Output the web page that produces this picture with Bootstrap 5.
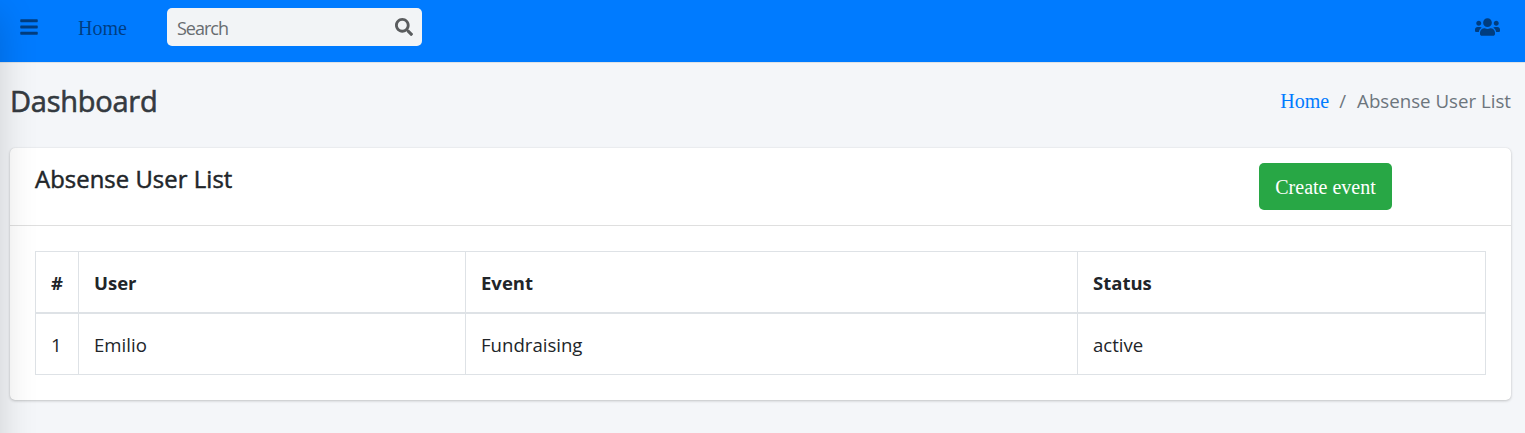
<!DOCTYPE html>
<html lang="en">
<head>
<meta charset="utf-8">
<meta name="viewport" content="width=device-width, initial-scale=1">
<title>Absense User List</title>
<link rel="stylesheet" href="https://cdn.jsdelivr.net/npm/bootstrap@5.3.0/dist/css/bootstrap.min.css">
<style>
body{font-family:"Segoe UI","Open Sans",sans-serif;font-size:18.6px;line-height:30px;color:#212529;background:#f4f6f9;height:433px;overflow:hidden}
.serif-text{font-family:"Liberation Serif",serif;font-size:20px;letter-spacing:0}
.top-bar{height:63px;background:#007bff;border-bottom:1px solid #dee2e6;padding:8px 25px 0 20px}
.top-bar svg,.top-bar a{fill:rgba(0,0,0,.5);color:rgba(0,0,0,.5)}
.top-bar .tool-row{height:38px}
.home-link{margin-left:40px;width:49px;line-height:38px;padding-top:1px}
.search-box{width:255px;height:38px;margin-left:40px;background:#f2f4f6;border-radius:5px;padding:0 9px 0 10px}
.search-box input{font-family:"Segoe UI","Open Sans",sans-serif;font-weight:400;font-size:18px;letter-spacing:-1px;width:180px;height:38px;color:#495057;padding:2px 0 0}
.search-box input::placeholder{color:#686c70;opacity:1}
.search-box svg{fill:#5a5c5e}
.title-row{height:85px;padding:0 14px 0 10px}
.page-title{font-size:29px;font-weight:500;color:#343a40;line-height:36px;letter-spacing:-.25px;-webkit-text-stroke:.6px #343a40;margin:-9px 0 0}
.crumbs{margin-top:-9px;color:#6c757d;line-height:30px}
.crumbs a{color:#007bff}
.crumb-sep{padding:0 11px 0 10px}
.crumb-now{font-size:18.7px}
.main-card{margin:0 14px 0 10px;height:252px;border:0;border-radius:5px;box-shadow:0 0 1px rgba(0,0,0,.125),0 1px 3px rgba(0,0,0,.2)}
.main-card .card-header{height:78px;background:transparent;border-bottom:1px solid rgba(0,0,0,.125);padding:15px 119px 0 25px}
.list-title{font-size:23.8px;font-weight:500;line-height:32px;letter-spacing:.08px;-webkit-text-stroke:.5px #212529;margin:0}
.btn-create{width:133px;height:47px;background:#28a745;color:#fff;border:0;border-radius:5px;padding:1px 0 0;line-height:47px}
.main-card .card-body{padding:25px 25px 0}
.data-table{table-layout:fixed;width:1451px;border-collapse:collapse;margin:0;color:#212529}
.data-table th,.data-table td{border:1px solid #dee2e6;padding:2px 15px 0;vertical-align:middle;height:62px;line-height:30px;background:transparent;box-shadow:none}
.data-table thead th{border-bottom-width:2px;height:61px;font-weight:700;padding-top:2px;font-size:18.5px}
.edge-panel{position:fixed;left:-250px;top:0;width:250px;height:200vh;box-shadow:0 14px 36px rgba(0,0,0,.16);z-index:1038}
</style>
</head>
<body>
<aside class="edge-panel"></aside>
<nav class="top-bar">
  <div class="tool-row d-flex align-items-center">
    <a href="#" class="d-flex" aria-label="Menu"><svg width="18" height="20" viewBox="0 0 448 512"><path d="M16 132h416c8.8 0 16-7.200 16-16V76c0-8.800-7.200-16-16-16H16C7.200 60 0 67.200 0 76v40c0 8.800 7.200 16 16 16zm0 160h416c8.800 0 16-7.200 16-16v-40c0-8.800-7.200-16-16-16H16c-8.800 0-16 7.200-16 16v40c0 8.800 7.200 16 16 16zm0 160h416c8.800 0 16-7.200 16-16v-40c0-8.800-7.200-16-16-16H16c-8.800 0-16 7.200-16 16v40c0 8.800 7.200 16 16 16z"/></svg></a>
    <a href="#" class="home-link serif-text text-decoration-none">Home</a>
    <form class="search-box d-flex align-items-center justify-content-between">
      <input type="search" class="border-0 bg-transparent" placeholder="Search" aria-label="Search">
      <svg width="18" height="18" viewBox="0 0 512 512"><path d="M505 442.700L405.300 343c-4.500-4.500-10.600-7-17-7H372c27.600-35.300 44-79.700 44-128C416 93.100 322.900 0 208 0S0 93.100 0 208s93.100 208 208 208c48.300 0 92.700-16.400 128-44v16.300c0 6.400 2.500 12.500 7 17l99.700 99.700c9.400 9.400 24.600 9.400 33.900 0l28.300-28.300c9.400-9.400 9.400-24.600.1-34zM208 336c-70.700 0-128-57.200-128-128 0-70.700 57.200-128 128-128 70.700 0 128 57.200 128 128 0 70.700-57.200 128-128 128z"/></svg>
    </form>
    <a href="#" class="ms-auto d-flex" aria-label="Users"><svg width="25" height="20" viewBox="0 0 640 512"><path d="M96 224c35.300 0 64-28.700 64-64s-28.700-64-64-64-64 28.700-64 64 28.700 64 64 64zm448 0c35.300 0 64-28.700 64-64s-28.700-64-64-64-64 28.700-64 64 28.700 64 64 64zm32 32h-64c-17.600 0-33.500 7.100-45.100 18.600 40.300 22.100 68.900 62 75.100 109.400h66c17.700 0 32-14.300 32-32v-32c0-35.300-28.700-64-64-64zm-256 0c61.900 0 112-50.100 112-112S381.900 32 320 32 208 82.100 208 144s50.100 112 112 112zm76.800 32h-8.300c-20.800 10-43.900 16-68.500 16s-47.600-6-68.500-16h-8.300C179.600 288 128 339.600 128 403.200V432c0 26.500 21.500 48 48 48h288c26.500 0 48-21.500 48-48v-28.800c0-63.600-51.600-115.200-115.200-115.200zm-223.700-13.400C161.500 263.100 145.600 256 128 256H64c-35.300 0-64 28.700-64 64v32c0 17.700 14.300 32 32 32h65.900c6.300-47.400 34.900-87.300 75.200-109.400z"/></svg></a>
  </div>
</nav>
<main>
  <header class="title-row d-flex align-items-center justify-content-between">
    <h1 class="page-title">Dashboard</h1>
    <div class="crumbs d-flex"><a href="#" class="serif-text text-decoration-none">Home</a><span class="crumb-sep">/</span><span class="crumb-now">Absense User List</span></div>
  </header>
  <section class="card main-card">
    <div class="card-header d-flex justify-content-between align-items-start">
      <h2 class="list-title">Absense User List</h2>
      <a href="#" class="btn btn-create serif-text">Create event</a>
    </div>
    <div class="card-body">
      <table class="data-table">
        <colgroup><col style="width:43px"><col style="width:387px"><col style="width:612px"><col></colgroup>
        <thead><tr><th>#</th><th>User</th><th>Event</th><th>Status</th></tr></thead>
        <tbody><tr><td>1</td><td>Emilio</td><td>Fundraising</td><td>active</td></tr></tbody>
      </table>
    </div>
  </section>
</main>
<script src="https://cdn.jsdelivr.net/npm/bootstrap@5.3.0/dist/js/bootstrap.bundle.min.js"></script>
</body>
</html>
